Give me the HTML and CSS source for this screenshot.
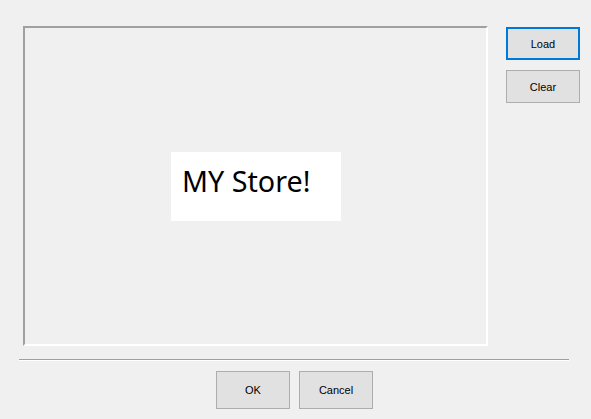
FILE: index.html
```html
<!DOCTYPE html>
<html>
<head>
<meta charset="utf-8">
<link rel="stylesheet" href="styles.css">
</head>
<body>
<div class="dialog">
  <div class="main">
    <div class="frame">
      <div class="picture"><span class="picture-text">MY Store!</span></div>
    </div>
    <div class="side">
      <button class="btn btn-side btn-focus">Load</button>
      <button class="btn btn-side">Clear</button>
    </div>
  </div>
  <div class="separator"></div>
  <div class="footer">
    <button class="btn btn-foot">OK</button>
    <button class="btn btn-foot">Cancel</button>
  </div>
</div>
</body>
</html>
```

FILE: styles.css
```css
html, body {
  margin: 0;
  padding: 0;
  background: #f0f0f0;
}
.dialog {
  width: 591px;
  height: 419px;
  box-sizing: border-box;
  font-family: "Liberation Sans", Arial, sans-serif;
  font-size: 11px;
  color: #000;
}
.main {
  display: flex;
  padding: 26px 0 0 23px;
  gap: 18px;
}
.frame {
  width: 465px;
  height: 320px;
  box-sizing: border-box;
  border-top: 2px solid #a0a0a0;
  border-left: 2px solid #a0a0a0;
  border-right: 2px solid #ffffff;
  border-bottom: 2px solid #ffffff;
  padding: 124px 0 0 146px;
}
.picture {
  width: 170px;
  height: 69px;
  background: #ffffff;
  box-sizing: border-box;
  padding: 9px 0 0 11px;
}
.picture-text {
  font-family: "Noto Sans", sans-serif;
  font-size: 28.7px;
  color: #000;
}
.side {
  display: flex;
  flex-direction: column;
  gap: 10px;
  padding-top: 1px;
}
.btn {
  box-sizing: border-box;
  background: #e1e1e1;
  border: 1px solid #adadad;
  border-radius: 0;
  font-family: "Liberation Sans", Arial, sans-serif;
  font-size: 11px;
  color: #000;
  padding: 0;
  margin: 0;
}
.btn-side {
  width: 74px;
  height: 33px;
}
.btn-focus {
  border: 2px solid #0078d7;
}
.separator {
  margin: 13px 0 0 19px;
  width: 550px;
  height: 0;
  border-top: 1px solid #a0a0a0;
  border-bottom: 1px solid #ffffff;
}
.footer {
  display: flex;
  gap: 9px;
  padding: 10px 0 0 216px;
}
.btn-foot {
  width: 74px;
  height: 38px;
}
```
